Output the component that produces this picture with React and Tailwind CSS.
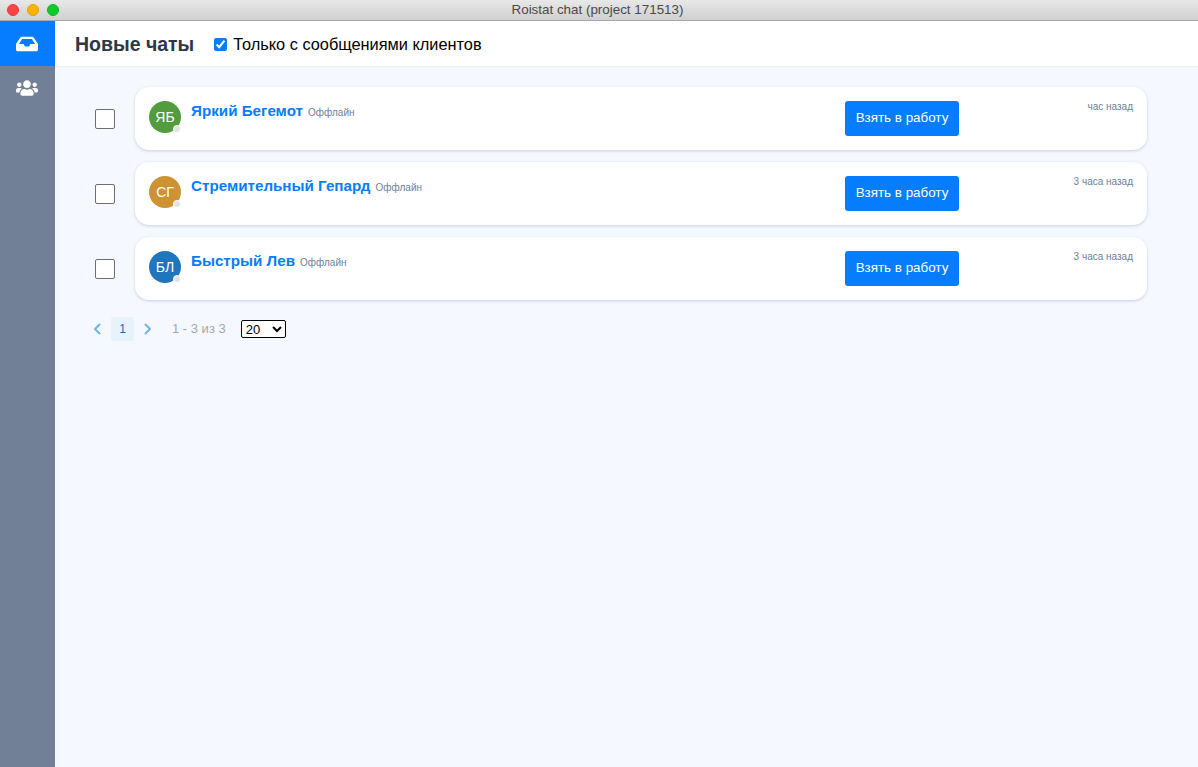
import React from 'react';
import { FaInbox, FaUsers } from 'react-icons/fa';

const chats = [
  { initials: 'ЯБ', name: 'Яркий Бегемот', time: 'час назад', color: 'bg-[#529b3f]' },
  { initials: 'СГ', name: 'Стремительный Гепард', time: '3 часа назад', color: 'bg-[#ce9232]' },
  { initials: 'БЛ', name: 'Быстрый Лев', time: '3 часа назад', color: 'bg-[#1f76bd]' },
];

const TitleBar = () => (
  <div className="h-[21px] shrink-0 relative flex items-center justify-center bg-gradient-to-b from-[#e8e8e8] to-[#d0d0d0] border-b border-[#a9a9a9]">
    <div className="absolute left-[7px] top-[4px] flex gap-2">
      <span className="w-3 h-3 rounded-full bg-[#fc4444] border border-[#e33e3a]" />
      <span className="w-3 h-3 rounded-full bg-[#fdb401] border border-[#e09e14]" />
      <span className="w-3 h-3 rounded-full bg-[#0ccb2b] border border-[#14ae2c]" />
    </div>
    <span className="text-[13.4px] leading-none text-[#4a4a4a] -ml-[3px]">Roistat chat (project 171513)</span>
  </div>
);

const Sidebar = () => (
  <div className="w-[55px] shrink-0 bg-[#718096] flex flex-col">
    <div className="h-[45px] bg-[#067dff] flex items-center justify-center pr-[1px]">
      <FaInbox className="text-white text-[22px]" />
    </div>
    <div className="h-[44px] flex items-center justify-center pr-[1px]">
      <FaUsers className="text-white text-[22px]" />
    </div>
  </div>
);

const Chevron = ({ points }) => (
  <svg width="8" height="12" viewBox="0 0 8 12" fill="none" className="shrink-0">
    <polyline points={points} stroke="#6db5ee" strokeWidth="2" strokeLinecap="round" strokeLinejoin="round" />
  </svg>
);

const ChatRow = ({ chat }) => (
  <div className="flex items-center">
    <input
      type="checkbox"
      className="appearance-none w-5 h-5 ml-[40px] mr-5 bg-white border border-[#6e6e6e] rounded-[2px] shrink-0"
    />
    <div className="w-[1012px] h-[63px] bg-white rounded-[14px] shadow-[0_1px_3px_rgba(90,110,160,0.3)] flex pl-[14px] pr-[14px] pt-[14px]">
      <div className={`relative w-8 h-8 rounded-full ${chat.color} flex items-center justify-center shrink-0`}>
        <span className="text-white text-sm leading-none">{chat.initials}</span>
        <span className="absolute right-0 bottom-0 w-2 h-2 rounded-full bg-[#e2e2e2] border border-white" />
      </div>
      <div className="ml-[10px] flex-1 flex items-baseline h-5">
        <span className="text-[#067dff] text-[15.2px] font-bold leading-5">{chat.name}</span>
        <span className="ml-[5px] text-[#718096] text-[10px]">Оффлайн</span>
      </div>
      <button className="w-[114px] h-[35px] bg-[#067dff] text-white text-[13.4px] rounded-[3px]">
        Взять в работу
      </button>
      <div className="w-[174px] text-right text-[#718096] text-[10px] leading-3">{chat.time}</div>
    </div>
  </div>
);

const Pagination = () => (
  <div className="flex items-center h-[24px] mt-[17px] ml-[38px] text-[13px]">
    <Chevron points="6.5,1.5 2,6 6.5,10.5" />
    <span className="ml-[10px] w-[23px] h-[24px] rounded-[3px] bg-[#e6f3fc] text-[#0b6fc0] flex items-center justify-center text-xs">1</span>
    <span className="ml-[10px] flex">
      <Chevron points="1.5,1.5 6,6 1.5,10.5" />
    </span>
    <span className="ml-[20px] text-[#a3a8b0]">1 - 3 из 3</span>
    <select className="ml-[15px] w-[45px] h-[18px] text-[13px] leading-none bg-white border border-black rounded-[2px] text-black">
      <option>20</option>
    </select>
  </div>
);

export default function App() {
  return (
    <div className="w-[1198px] h-[767px] flex flex-col overflow-hidden font-['Liberation_Sans',sans-serif]">
      <TitleBar />
      <div className="flex-1 flex min-h-0">
        <Sidebar />
        <div className="flex-1 bg-[#f5f8ff] flex flex-col min-w-0">
          <div className="h-[46px] bg-white border-b border-[#edf1f8] flex items-center pl-5 pt-[2px]">
            <h1 className="text-[19.5px] font-bold text-[#2d3748]">Новые чаты</h1>
            <label className="ml-5 flex items-center text-[16.33px] text-black">
              <input type="checkbox" defaultChecked className="w-[13px] h-[13px] mr-[6px] accent-[#067dff]" />
              Только с сообщениями клиентов
            </label>
          </div>
          <div className="pt-5 flex flex-col gap-3">
            {chats.map((chat) => (
              <ChatRow key={chat.initials} chat={chat} />
            ))}
          </div>
          <Pagination />
        </div>
      </div>
    </div>
  );
}
